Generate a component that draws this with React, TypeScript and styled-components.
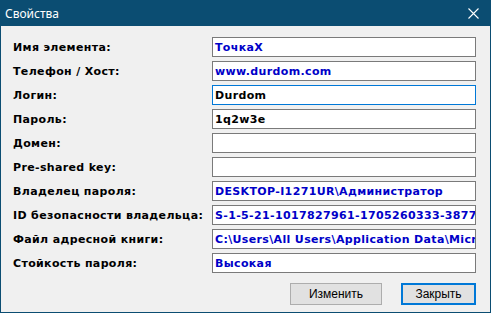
import styled, { createGlobalStyle } from 'styled-components'

const GlobalStyle = createGlobalStyle`
  html, body {
    margin: 0;
    padding: 0;
    background: #f0f0f0;
  }
`

const Window = styled.div`
  width: 491px;
  height: 313px;
  display: flex;
  flex-direction: column;
  box-sizing: border-box;
  background: #0b4d72;
`

const TitleBar = styled.div`
  height: 26px;
  display: flex;
  align-items: center;
  justify-content: space-between;
  padding: 0 12px 0 5px;
  color: #ffffff;
  font-family: 'Noto Sans', 'Liberation Sans', sans-serif;
  font-size: 12px;
`

const CloseIcon = styled.svg`
  width: 11px;
  height: 11px;
  display: block;
`

const Body = styled.div`
  flex: 1;
  margin: 0 1px 1px 1px;
  background: #f0f0f0;
  padding: 11px 14px 0 12px;
  display: flex;
  flex-direction: column;
`

const Form = styled.div`
  display: grid;
  grid-template-columns: 199px 264px;
  grid-auto-rows: 20px;
  row-gap: 4px;
`

const Label = styled.div`
  display: flex;
  align-items: center;
  font-family: 'DejaVu Sans', Verdana, sans-serif;
  font-weight: bold;
  font-size: 11px;
  letter-spacing: 0.35px;
  color: #000000;
  white-space: nowrap;
`

const Field = styled.div<{ $tone: 'blue' | 'black'; $focused?: boolean }>`
  box-sizing: border-box;
  height: 20px;
  display: flex;
  align-items: center;
  padding: 0 2px;
  background: #ffffff;
  border: 1px solid ${(p) => (p.$focused ? '#0078d7' : '#7a7a7a')};
  font-family: 'DejaVu Sans', Verdana, sans-serif;
  font-weight: bold;
  font-size: 11px;
  letter-spacing: 0.35px;
  color: ${(p) => (p.$tone === 'blue' ? '#0000c8' : '#000000')};
  white-space: nowrap;
  overflow: hidden;
`

const Buttons = styled.div`
  display: flex;
  justify-content: flex-end;
  gap: 19px;
  margin-top: 10px;
`

const Button = styled.button<{ $primary?: boolean; $w: number }>`
  box-sizing: border-box;
  width: ${(p) => p.$w}px;
  height: 22px;
  margin: 0;
  padding: 0;
  background: #e1e1e1;
  border: ${(p) => (p.$primary ? '2px solid #0078d7' : '1px solid #adadad')};
  font-family: 'Liberation Sans', Arial, sans-serif;
  font-size: 12px;
  color: #000000;
`

const rows: { label: string; value: string; tone: 'blue' | 'black'; focused?: boolean }[] = [
  { label: 'Имя элемента:', value: 'ТочкаX', tone: 'blue' },
  { label: 'Телефон / Хост:', value: 'www.durdom.com', tone: 'blue' },
  { label: 'Логин:', value: 'Durdom', tone: 'black', focused: true },
  { label: 'Пароль:', value: '1q2w3e', tone: 'black' },
  { label: 'Домен:', value: '', tone: 'black' },
  { label: 'Pre-shared key:', value: '', tone: 'black' },
  { label: 'Владелец пароля:', value: 'DESKTOP-I1271UR\\Администратор', tone: 'blue' },
  { label: 'ID безопасности владельца:', value: 'S-1-5-21-1017827961-1705260333-3877062394-500', tone: 'blue' },
  { label: 'Файл адресной книги:', value: 'C:\\Users\\All Users\\Application Data\\Microsoft\\Address Book', tone: 'blue' },
  { label: 'Стойкость пароля:', value: 'Высокая', tone: 'blue' },
]

export default function App() {
  return (
    <>
      <GlobalStyle />
      <Window>
        <TitleBar>
          <span>Свойства</span>
          <CloseIcon viewBox="0 0 11 11">
            <path d="M0.5 0.5 L10.5 10.5 M10.5 0.5 L0.5 10.5" stroke="#ffffff" strokeWidth="1.1" />
          </CloseIcon>
        </TitleBar>
        <Body>
          <Form>
            {rows.map((r) => (
              <>
                <Label key={r.label + '-l'}>{r.label}</Label>
                <Field key={r.label + '-f'} $tone={r.tone} $focused={r.focused}>
                  {r.value}
                </Field>
              </>
            ))}
          </Form>
          <Buttons>
            <Button $w={92}>Изменить</Button>
            <Button $w={75} $primary>
              Закрыть
            </Button>
          </Buttons>
        </Body>
      </Window>
    </>
  )
}
